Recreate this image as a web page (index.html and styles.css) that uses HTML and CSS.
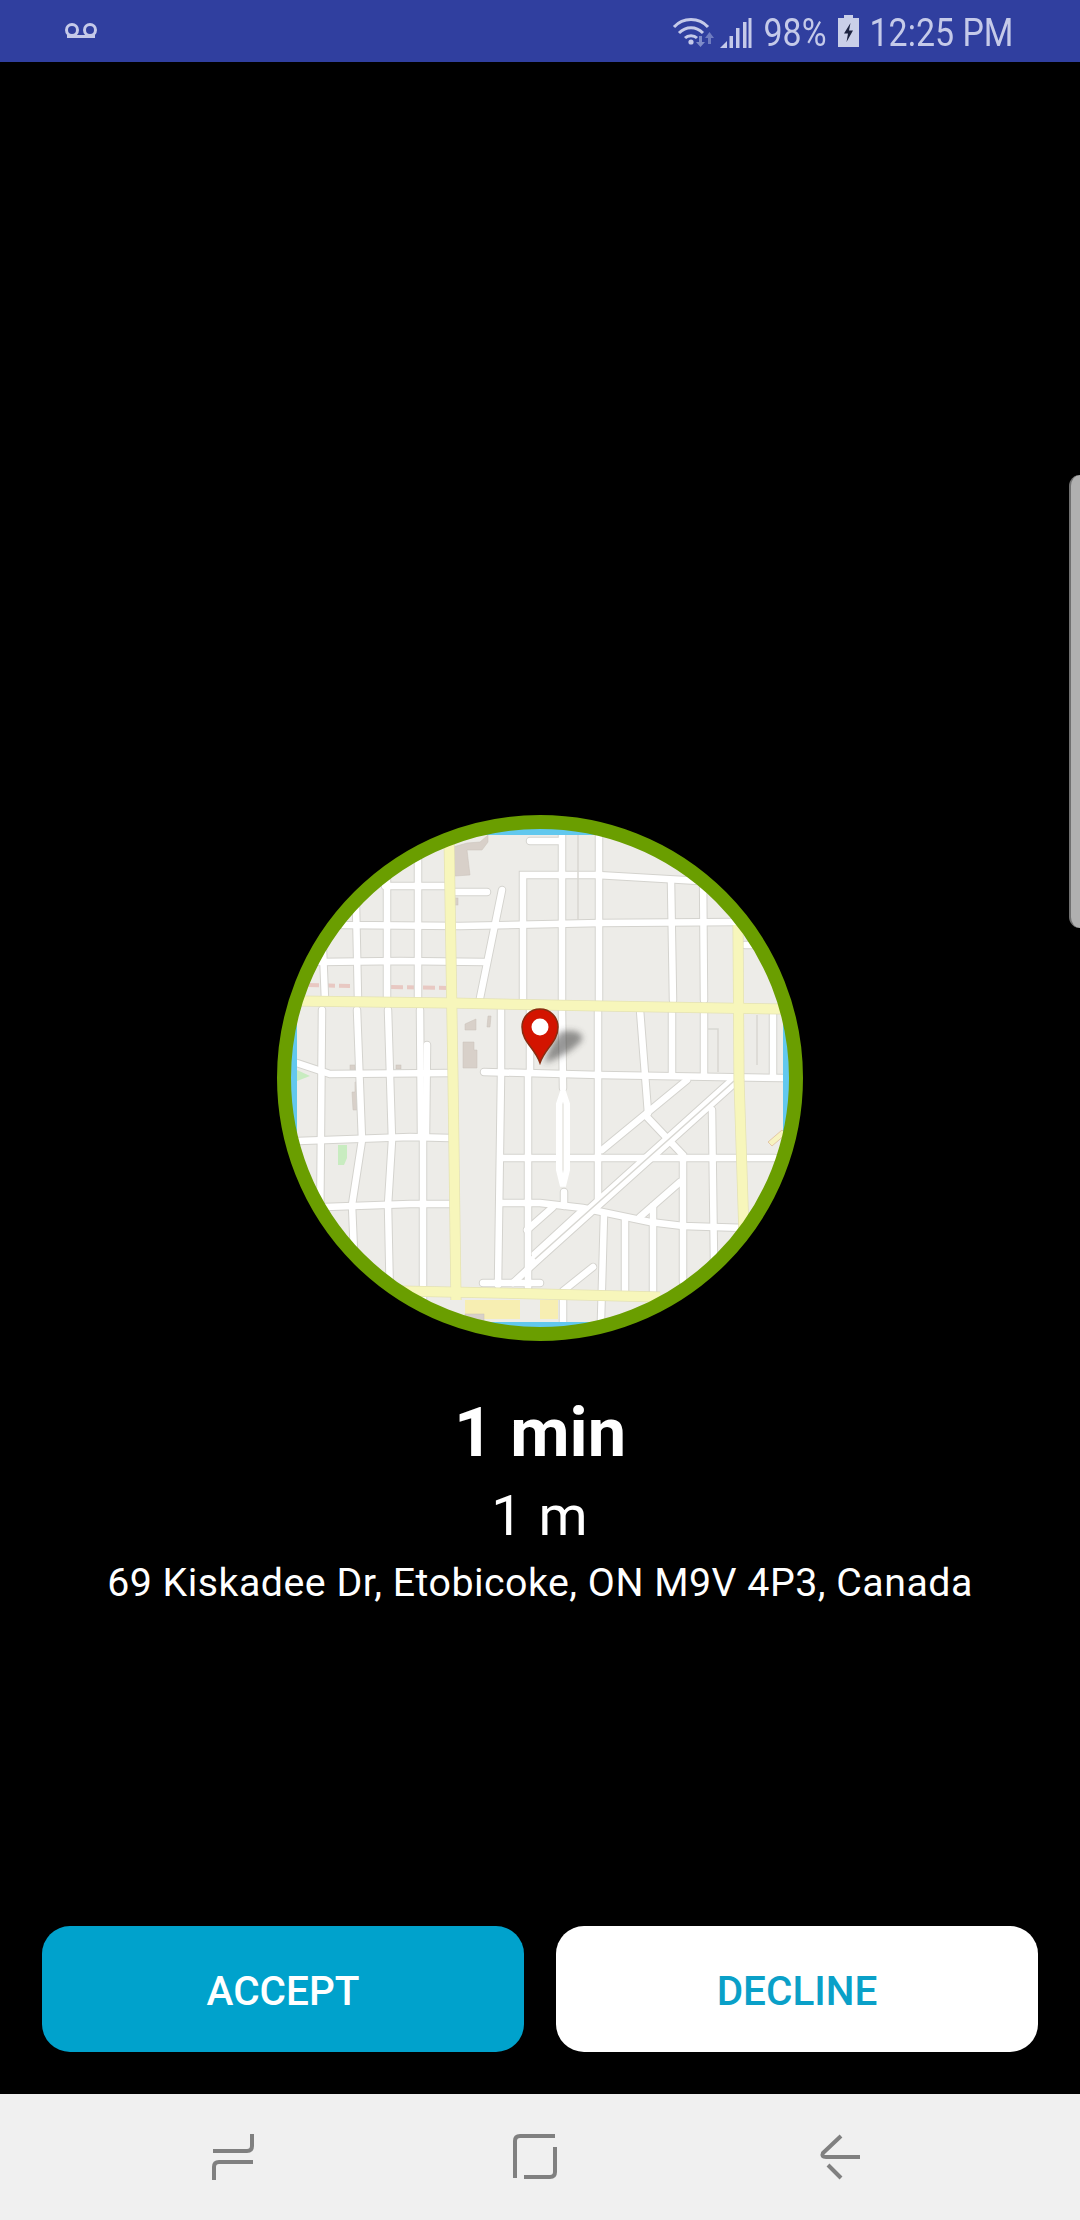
FILE: index.html
```html
<!DOCTYPE html>
<html lang="en">
<head>
<meta charset="utf-8">
<title>Incoming request</title>
<link rel="stylesheet" href="styles.css">
</head>
<body>
<div class="page">
  <header class="status">
    <svg class="vm" viewBox="0 0 34 16"><circle cx="8" cy="7" r="5.5"/><circle cx="26" cy="7" r="5.5"/><path d="M3 13.5H31"/></svg>
    <div class="status-right">
      <svg class="wifi" viewBox="0 0 46 30">
        <path class="arc" d="M2 11C11 1 27 1 36 11"/>
        <path class="arc" d="M7 17C14 10 24 10 31 17"/>
        <path class="arc" d="M13 22C16 19 22 19 25 22"/>
        <circle class="dot" cx="19" cy="26" r="2.6"/>
        <path class="arrow" d="M27 20H30V26H33L28.5 31L24 26H27Z"/>
        <path class="arrow up" d="M36 28H39V22H42L37.5 16L33 22H36Z"/>
      </svg>
      <svg class="signal" viewBox="0 0 32 31">
        <path d="M0 31L7 24V31Z"/><rect x="9.500" y="19" width="3.500" height="12"/><rect x="16" y="11" width="3.500" height="20"/><rect x="23" y="5" width="3.500" height="26"/><rect x="28.500" y="1" width="3" height="30"/>
      </svg>
      <span class="pct">98%</span>
      <svg class="batt" viewBox="0 0 21 32"><path d="M6 0H15V3H21V32H0V3H6Z"/><path class="bolt" d="M12.500 8L6 18.500H10L8.500 27L15 15.500H11Z"/></svg>
      <span class="time">12:25 PM</span>
    </div>
  </header>

  <main class="main">
    <svg class="map" viewBox="277 815 526 526">
      <defs>
        <clipPath id="disc"><circle cx="540" cy="1078" r="250"/></clipPath>
        <clipPath id="land-edge"><rect x="297" y="835" width="486" height="487"/></clipPath>
        <filter id="soft" x="-30%" y="-30%" width="160%" height="160%"><feGaussianBlur stdDeviation="3"/></filter>
        <g id="roads">
          <path d="M385 886H445"/>
          <path d="M453 892H487"/>
          <path d="M300 923L343 925L460 926L600 923L736 922"/>
          <path d="M320 962L400 961L484 962"/>
          <path d="M502 890L480 998"/>
          <path d="M523 1000V875H597L700 881"/>
          <path d="M530 841H560"/>
          <path d="M418 860V1000"/>
          <path d="M387 880V1000"/>
          <path d="M356 905L358 1000"/>
          <path d="M323 950L325 1000"/>
          <path d="M562 835V1000"/>
          <path d="M599 835V1000"/>
          <path d="M671 881L673 1000"/>
          <path d="M703 870L704 1000"/>
          <path d="M745 945H770"/>
          <path d="M322 1010L320 1240"/>
          <path d="M357 1010L362 1140L352 1205L356 1300"/>
          <path d="M388 1010L392 1140L388 1205L390 1300"/>
          <path d="M420 1010L421 1135"/>
          <path d="M427 1045L426 1135"/>
          <path d="M423 1140V1300"/>
          <path d="M297 1063L330 1074L450 1073"/>
          <path d="M298 1141L410 1137L450 1138"/>
          <path d="M325 1207L410 1204L450 1204"/>
          <path d="M484 1072L600 1075L785 1078"/>
          <path d="M501 1008V1072"/>
          <path d="M530 1008V1072"/>
          <path d="M562 1010L563 1088"/>
          <path d="M598 1010V1205"/>
          <path d="M640 1010L648 1113"/>
          <path d="M672 1010V1074"/>
          <path d="M704 1010V1074"/>
          <path d="M773 1010V1076"/>
          <path d="M501 1076L498 1285"/>
          <path d="M528 1076V1290"/>
          <path d="M502 1158H775"/>
          <path d="M500 1203L540 1203L583 1208L650 1222L683 1226L745 1228"/>
          <path d="M604 1214L601 1320"/>
          <path d="M687 1080L602 1150"/>
          <path d="M647 1117L683 1155V1282"/>
          <path d="M680 1182L640 1217"/>
          <path d="M583 1210L535 1254"/>
          <path d="M553 1207L527 1230"/>
          <path d="M593 1267L563 1291"/>
          <path d="M712 1110L714 1262"/>
          <path d="M653 1206V1302"/>
          <path d="M625 1220V1295"/>
          <path d="M564 1192V1206"/>
          <path d="M738 1080L540 1258L513 1283"/>
          <path d="M730 1082L530 1262"/>
          <path d="M483 1283H540"/>
          <path d="M563 1300V1325"/>
        </g>
        <path id="capsule" d="M563 1092L559 1104V1170L563 1186L567 1170V1104Z"/>
        <g id="yellow">
          <path d="M449 835L453 1080L456 1300"/>
          <path d="M296 1001L450 1003L600 1006L785 1009"/>
          <path d="M738 925L739 1080L744 1235"/>
          <path d="M400 1291L540 1294L660 1297"/>
        </g>
      </defs>
      <circle class="water" cx="540" cy="1078" r="258"/>
      <g clip-path="url(#disc)">
        <g clip-path="url(#land-edge)">
          <rect class="land" x="297" y="835" width="486" height="487"/>
          <path class="park" d="M338 1145H347V1158L344 1165H338Z"/>
          <path class="park" d="M297 1070L310 1076L297 1081Z"/>
          <path class="building" d="M453 847L467 843L480 842L488 835V842L482 850H467L470 875L455 876Z"/>
          <rect class="building" x="453" y="898" width="5" height="7"/>
          <path class="building" d="M465 1030V1024L476 1019V1030Z"/>
          <path class="building" d="M487 1027L488 1016H491L490 1027Z"/>
          <path class="building" d="M463 1042H474V1050H477V1068H463Z"/>
          <rect class="building" x="350" y="1065" width="5" height="5"/>
          <rect class="building" x="396" y="1065" width="5" height="4"/>
          <path class="building" d="M352 1092H355V1082H357V1110H353Z"/>
          <path class="rail" d="M307 985L350 986"/>
          <path class="rail" d="M391 987L447 988"/>
          <g class="casing"><use href="#roads"/></g>
          <g class="road"><use href="#roads"/></g>
          <use class="cap-shape" href="#capsule"/>
          <path class="thin" d="M734 1081L535 1259"/>
          <path class="thin" d="M578 835V920"/>
          <path class="thin" d="M757 1015V1065"/>
          <path class="thin" d="M708 1029H718V1072"/>
          <rect class="lot" x="465" y="1300" width="55" height="19"/>
          <rect class="gap" x="520" y="1300" width="13" height="13"/>
          <rect class="building" x="465" y="1314" width="19" height="8"/>
          <rect class="lot" x="540" y="1300" width="18" height="19"/>
          <path class="patch" d="M768 1142L782 1130L786 1134L772 1146Z"/>
          <g class="yellow-casing"><use href="#yellow"/></g>
          <g class="yellow"><use href="#yellow"/></g>
        </g>
        <path class="shadow" d="M544 1063C552 1061 572 1052 582 1040C584 1032 572 1029 560 1032L550 1048Z"/>
        <path class="pin" d="M540 1063C535 1048 522 1042 522 1027A18 18 0 0 1 558 1027C558 1042 545 1048 540 1063Z"/>
        <circle class="pin-dot" cx="540" cy="1027" r="8.500"/>
      </g>
      <circle class="ring" cx="540" cy="1078" r="256"/>
    </svg>
    <h1 class="eta">1 min</h1>
    <p class="dist">1 m</p>
    <p class="addr">69 Kiskadee Dr, Etobicoke, ON M9V 4P3, Canada</p>
    <div class="actions">
      <button class="btn accept">ACCEPT</button>
      <button class="btn decline">DECLINE</button>
    </div>
  </main>

  <nav class="nav">
    <svg class="nav-icon" viewBox="0 0 50 50"><path d="M44 2V14Q44 19 39 19H5"/><path d="M45 30H11Q6 30 6 35V48"/></svg>
    <svg class="nav-icon" viewBox="0 0 50 50"><path d="M5 46V9Q5 4 10 4H45"/><path d="M45 15V40Q45 45 40 45H14"/></svg>
    <svg class="nav-icon" viewBox="0 0 50 50"><path d="M29 4L11 21Q9 25 14 25H48"/><path d="M16 33L29 46"/></svg>
  </nav>

  <div class="handle"></div>
</div>
</body>
</html>
```
FILE: styles.css
```css
* { box-sizing: border-box; }
html, body { margin: 0; padding: 0; background: #000; }
body { font-family: Roboto, "Liberation Sans", sans-serif; }

.page {
  position: relative;
  width: 1080px;
  height: 2220px;
  display: flex;
  flex-direction: column;
  overflow: hidden;
  background: #000;
}

/* status bar */
.status {
  height: 62px;
  flex: none;
  background: #303f9f;
  color: #c5cae9;
  display: flex;
  align-items: center;
  justify-content: space-between;
  padding: 0 66px 0 64px;
}
.vm { width: 34px; height: 16px; fill: none; stroke: #c5cae9; stroke-width: 3; }
.status-right { display: flex; align-items: center; }
.wifi { width: 46px; height: 30px; margin-top: -1px; overflow: visible; }
.wifi .arc { fill: none; stroke: #c5cae9; stroke-width: 3; }
.wifi .dot { fill: #c5cae9; }
.wifi .arrow { fill: #7f8cc9; }
.wifi .arrow.up { fill: #6f7cc0; }
.signal { width: 32px; height: 31px; margin-left: 2px; margin-top: 3px; fill: #c5cae9; }
.pct, .time {
  font-size: 39px;
  line-height: 62px;
  padding-top: 3px;
  white-space: nowrap;
  display: flex;
  justify-content: center;
  transform: scaleX(.87);
}
.pct { width: 62px; margin-left: 12px; }
.batt { width: 21px; height: 32px; margin-left: 12px; fill: #c9cfe8; }
.batt .bolt { fill: #1c2340; }
.time { width: 145px; margin-left: 10px; }

/* main */
.main {
  flex: 1;
  display: flex;
  flex-direction: column;
  align-items: center;
  padding-top: 753px;
  color: #fff;
}
.map { width: 526px; height: 526px; flex: none; }
.water { fill: #62c8ee; }
.land { fill: #edece8; }
.park { fill: #c8ecc0; }
.building { fill: #d8d0c9; stroke: #c8c0b8; stroke-width: .5; }
.rail { fill: none; stroke: #e8c8c2; stroke-width: 4; stroke-dasharray: 12 4; }
.casing { fill: none; stroke: #d4d3ce; stroke-width: 8.500; stroke-linecap: round; }
.road { fill: none; stroke: #fff; stroke-width: 6.500; stroke-linecap: round; }
.cap-shape { fill: #edece8; stroke: #fff; stroke-width: 6; }
.thin { fill: none; stroke: #d8d7d2; stroke-width: 1.500; }
.lot { fill: #f7eeb2; }
.gap { fill: #edece8; }
.patch { fill: #f7f3c0; stroke: #e4c6a8; stroke-width: 1; }
.yellow-casing { fill: none; stroke: #e4e2b4; stroke-width: 11; }
.yellow { fill: none; stroke: #f7f6bb; stroke-width: 9.500; }
.shadow { fill: #333; opacity: .5; filter: url(#soft); }
.pin { fill: #d31400; stroke: #8a2c10; stroke-width: 1.500; }
.pin-dot { fill: #fff; }
.ring { fill: none; stroke: #6a9e00; stroke-width: 14; }

.eta { margin: 54px 0 0; font-size: 68.5px; line-height: 76px; font-weight: 700; }
.dist { margin: 12px 0 0; font-size: 56px; line-height: 66px; font-weight: 400; letter-spacing: 1px; }
.addr { margin: 10px 0 0; font-size: 39.3px; line-height: 48px; font-weight: 400; letter-spacing: .5px; }

.actions {
  margin-top: auto;
  width: 100%;
  display: flex;
  gap: 32px;
  padding: 0 42px 42px;
}
.btn {
  flex: 1;
  height: 126px;
  border: 0;
  border-radius: 28px;
  font-family: inherit;
  font-size: 40.5px;
  font-weight: 500;
  padding: 3px 0 0;
}
.accept { background: #00a2cc; color: #fff; }
.decline { background: #fff; color: #0aa0c8; }

/* nav */
.nav {
  height: 126px;
  flex: none;
  background: #f0f0f0;
  display: flex;
  justify-content: space-between;
  align-items: center;
  padding: 0 218px 0 208px;
}
.nav-icon { width: 50px; height: 50px; fill: none; stroke: #808080; stroke-width: 4; }

/* edge handle */
.handle {
  position: absolute;
  top: 475px;
  right: 0;
  width: 11px;
  height: 453px;
  background: #b0b0b0;
  border-left: 2px solid #707070;
  border-radius: 12px 0 0 12px;
}
```
